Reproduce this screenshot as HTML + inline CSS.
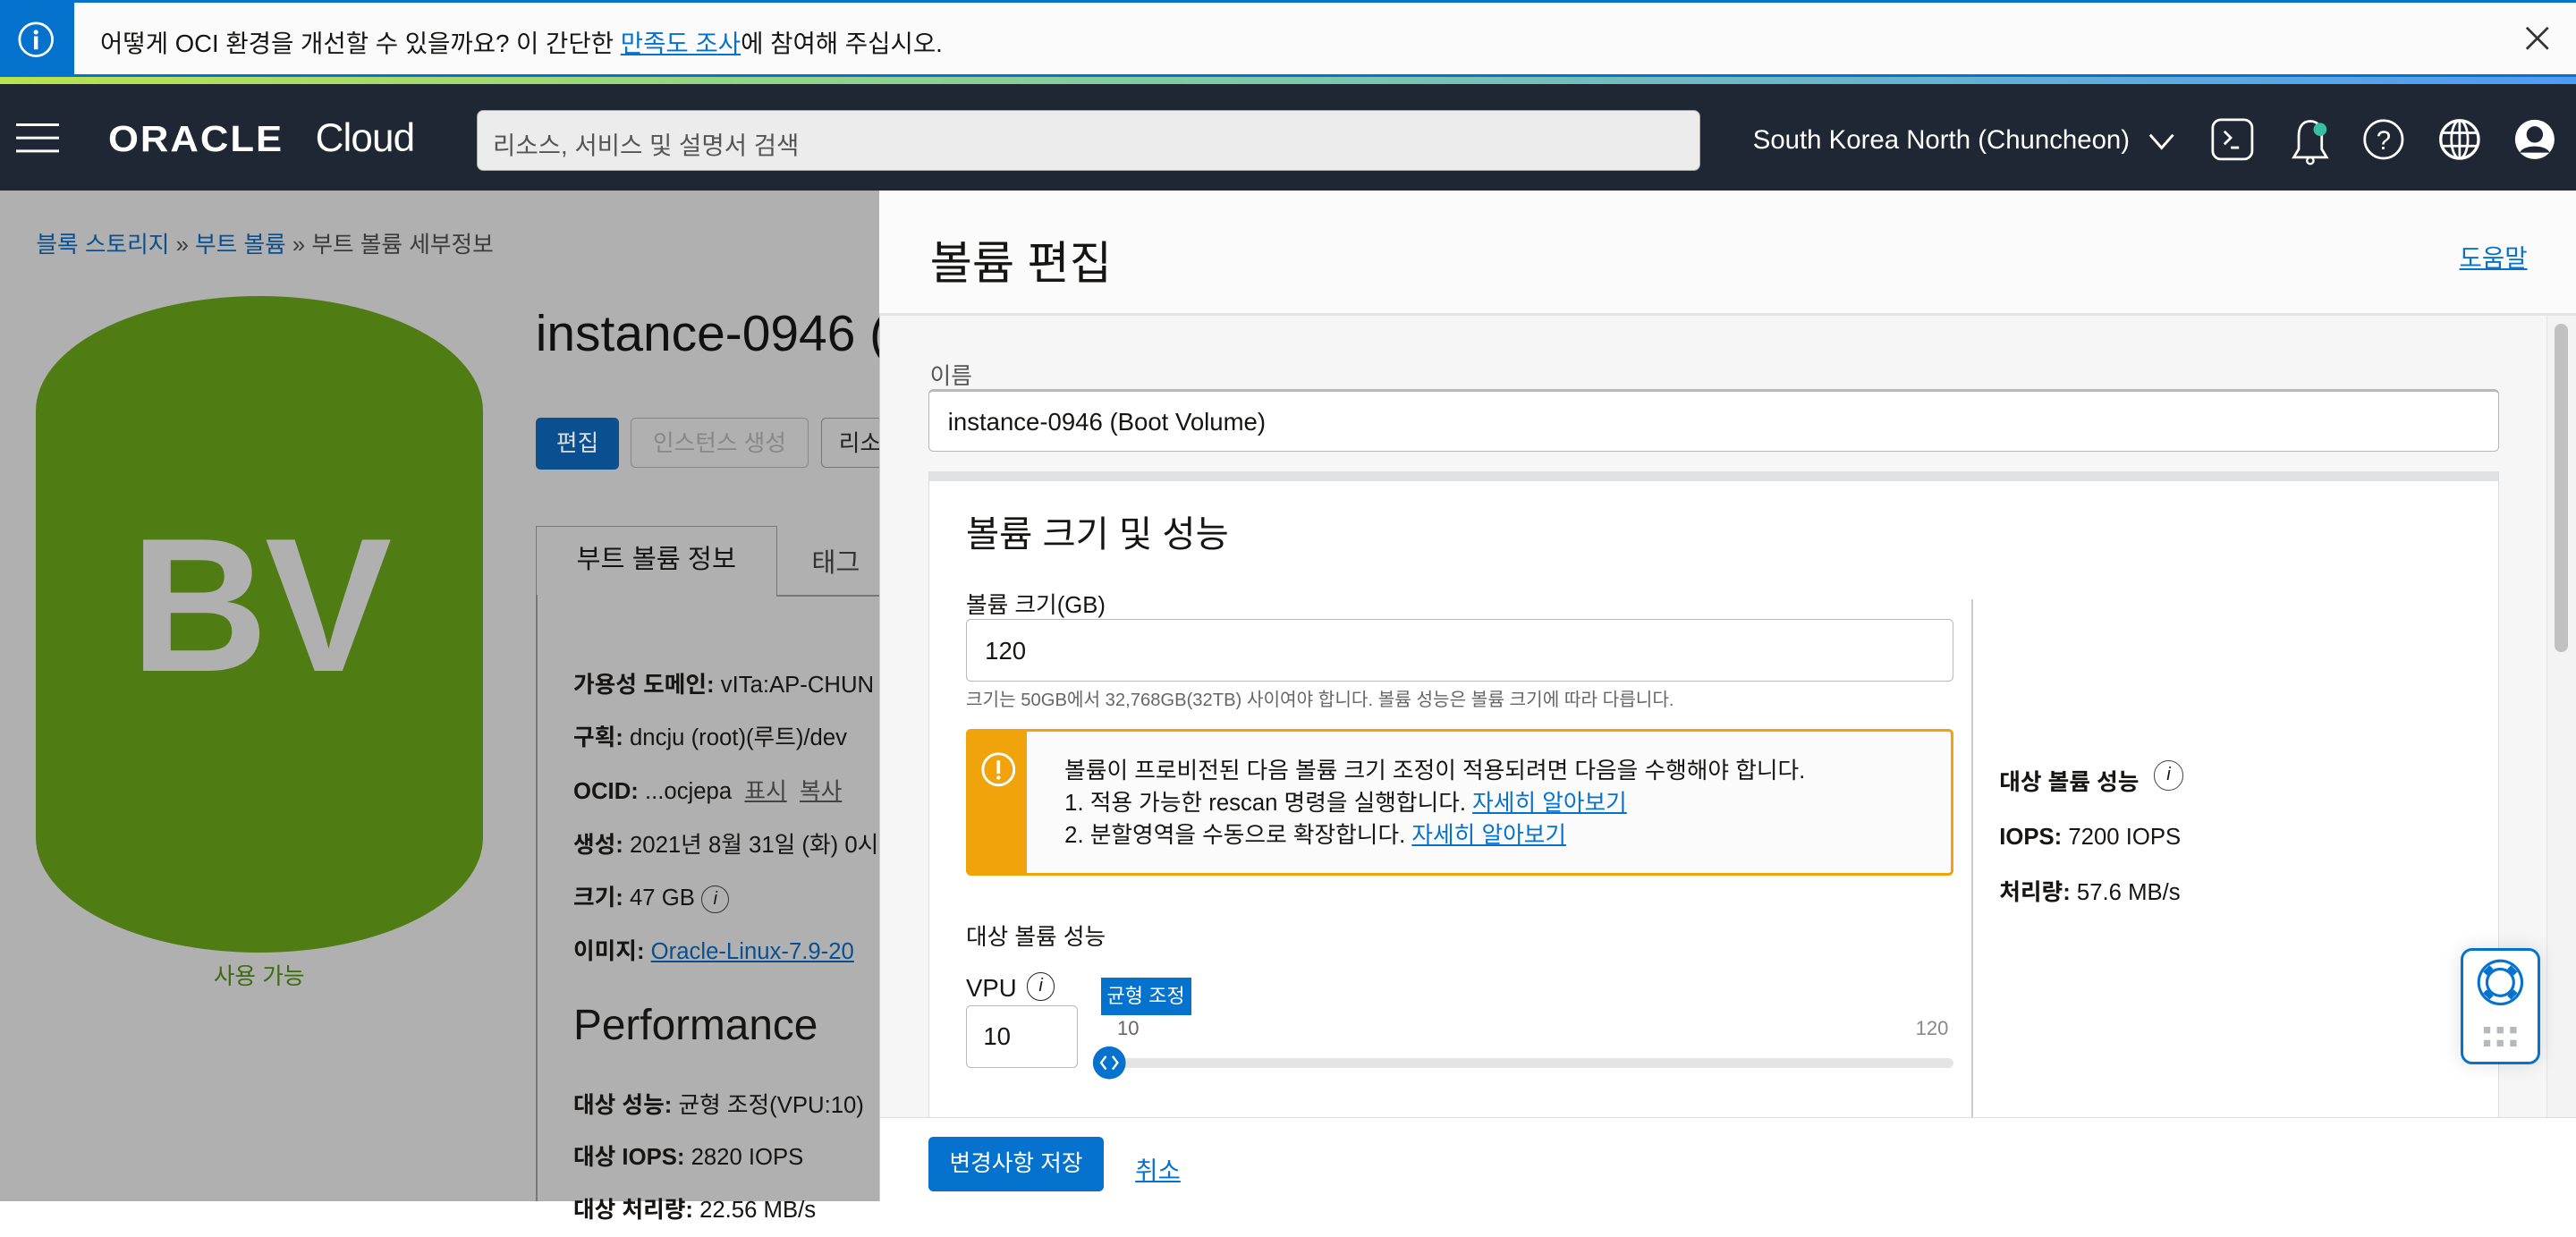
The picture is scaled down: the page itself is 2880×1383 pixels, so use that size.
<!DOCTYPE html>
<html><head><meta charset="utf-8"><style>
html{zoom:1.8367}
body{margin:0;width:1568px;height:731px;overflow:hidden;position:relative;font-family:"Liberation Sans","Noto Sans CJK KR",sans-serif;color:#161513;background:#fff}
.a{position:absolute}
.lk{color:#0572ce;text-decoration:underline}
.ov{color:#161513}
</style></head><body>
<!-- banner -->
<div class="a" style="left:0;top:0;width:1568px;height:47px;background:#fbfbfb;border-top:2px solid #0572ce;border-bottom:2px solid #0572ce;box-sizing:border-box"></div>
<div class="a" style="left:0;top:0;width:45px;height:47px;background:#0572ce"></div>
<svg class="a" style="left:11px;top:13px" width="22" height="22" viewBox="0 0 22 22"><circle cx="11" cy="11" r="10" fill="none" stroke="#fff" stroke-width="1.5"/><circle cx="11" cy="6.5" r="1.4" fill="#fff"/><rect x="9.8" y="9" width="2.4" height="8" fill="#fff"/></svg>
<div class="a" style="left:61px;top:14px;font-size:15px">어떻게 OCI 환경을 개선할 수 있을까요? 이 간단한 <span class="lk">만족도 조사</span>에 참여해 주십시오.</div>
<svg class="a" style="left:1537px;top:16px" width="15" height="15"><path d="M1 1L14 14M14 1L1 14" stroke="#333" stroke-width="1.5"/></svg>
<div class="a" style="left:0;top:47px;width:1568px;height:4px;background:linear-gradient(90deg,#b9e34b,#7fc8a9 50%,#4f9cf5)"></div>
<!-- nav -->
<div class="a" style="left:0;top:51px;width:1568px;height:65px;background:#1e2733"></div>
<div class="a" style="left:10px;top:75px;width:26px;height:2px;background:#fff;box-shadow:0 8px 0 #fff,0 16px 0 #fff"></div>
<div class="a" style="left:66px;top:72px;color:#fff;font-size:22px;font-weight:bold;letter-spacing:1px;transform:scaleX(1.08);transform-origin:left">ORACLE</div>
<div class="a" style="left:192px;top:71px;color:#fff;font-size:24px;letter-spacing:-0.5px">Cloud</div>
<div class="a" style="left:290px;top:67px;width:745px;height:37px;background:#ececec;border-radius:4px;border:1px solid #aaa;box-sizing:border-box"></div>
<div class="a" style="left:300px;top:76px;font-size:15px;color:#555">리소스, 서비스 및 설명서 검색</div>
<div class="a" style="left:1067px;top:76px;font-size:16px;color:#fff">South Korea North (Chuncheon)</div>
<svg class="a" style="left:1308px;top:80px" width="16" height="12"><path d="M1 2L8 10L15 2" stroke="#fff" fill="none" stroke-width="1.6"/></svg>
<svg class="a" style="left:1346px;top:72px" width="26" height="26"><rect x="1" y="1" width="24" height="24" rx="5" fill="none" stroke="#fff" stroke-width="1.5"/><path d="M8 8L12 12L8 16M12 18H17" stroke="#fff" fill="none" stroke-width="1.5"/></svg>
<svg class="a" style="left:1393px;top:71px" width="26" height="30"><path d="M13 3C8 3 6 7 6 12V20L3 25H23L20 20V12C20 7 18 3 13 3Z" stroke="#fff" fill="none" stroke-width="1.5"/><circle cx="13" cy="27" r="2" stroke="#fff" fill="none" stroke-width="1.3"/><circle cx="19" cy="8" r="4" fill="#37c0a0"/></svg>
<svg class="a" style="left:1438px;top:72px" width="26" height="26"><circle cx="13" cy="13" r="11.5" stroke="#fff" fill="none" stroke-width="1.5"/><text x="13" y="19" fill="#fff" font-size="16" text-anchor="middle" font-family="Liberation Sans">?</text></svg>
<svg class="a" style="left:1484px;top:72px" width="26" height="26"><circle cx="13" cy="13" r="11.5" stroke="#fff" fill="none" stroke-width="1.8"/><ellipse cx="13" cy="13" rx="5" ry="11.5" stroke="#fff" fill="none" stroke-width="1.5"/><path d="M2 9H24M2 17H24M13 1V25" stroke="#fff" stroke-width="1.5"/></svg>
<svg class="a" style="left:1530px;top:72px" width="26" height="26"><circle cx="13" cy="13" r="12" fill="#fff"/><circle cx="13" cy="10" r="5" fill="#1e2733"/><path d="M4 21C6 16 20 16 22 21" fill="#1e2733"/></svg>
<!-- left dimmed page -->
<div class="a" style="left:0;top:116px;width:535px;height:615px;background:#b0b0b0"></div>
<div class="a" style="left:22px;top:138px;font-size:14px;color:#3b3b3b"><span style="color:#0a4f8f">블록 스토리지</span> » <span style="color:#0a4f8f">부트 볼륨</span> » 부트 볼륨 세부정보</div>
<div class="a" style="left:22px;top:180px;width:272px;height:400px;background:#507c14;border-radius:136px 136px 136px 136px/70px 70px 70px 70px"></div>
<div class="a" style="left:22px;top:302px;width:272px;text-align:center;font-size:116px;font-weight:bold;color:#b0b0b0;letter-spacing:-2px">BV</div>
<div class="a" style="left:130px;top:583px;font-size:14px;color:#3e6a10">사용 가능</div>
<div class="a" style="left:326px;top:185px;font-size:31px;color:#111">instance-0946 (</div>
<div class="a" style="left:326px;top:254px;width:51px;height:32px;background:#0a4f8f;border-radius:3px;color:#ddd;font-size:14px;text-align:center;line-height:32px">편집</div>
<div class="a" style="left:384px;top:254px;width:108px;height:31px;border:1px solid #888;border-radius:3px;color:#888;font-size:14px;text-align:center;line-height:31px;box-sizing:border-box">인스턴스 생성</div>
<div class="a" style="left:500px;top:254px;width:40px;height:31px;border:1px solid #777;border-radius:3px;color:#222;font-size:14px;line-height:31px;padding-left:10px;box-sizing:border-box">리소</div>
<div class="a" style="left:326px;top:320px;width:147px;height:43px;border:1px solid #777;border-bottom:none;box-sizing:border-box;font-size:16px;text-align:center;line-height:40px">부트 볼륨 정보</div>
<div class="a" style="left:473px;top:362px;width:62px;height:1px;background:#777"></div>
<div class="a" style="left:326px;top:362px;width:1px;height:369px;background:#777"></div>
<div class="a" style="left:494px;top:330px;font-size:16px;color:#333">태그</div>
<div class="a ov" style="left:349px;top:401px;font-size:14px;line-height:32.5px">
<div><b>가용성 도메인:</b> vITa:AP-CHUN</div>
<div><b>구획:</b> dncju (root)(루트)/dev</div>
<div><b>OCID:</b> ...ocjepa &nbsp;<u style="color:#444">표시</u> &nbsp;<u style="color:#444">복사</u></div>
<div><b>생성:</b> 2021년 8월 31일 (화) 0시</div>
<div><b>크기:</b> 47 GB <span style="display:inline-block;width:16px;height:16px;border:1px solid #333;border-radius:50%;text-align:center;font-size:11px;line-height:16px;font-style:italic;vertical-align:middle">i</span></div>
<div><b>이미지:</b> <u style="color:#0a4f8f">Oracle-Linux-7.9-20</u></div>
</div>
<div class="a ov" style="left:349px;top:609px;font-size:26px">Performance</div>
<div class="a ov" style="left:349px;top:657px;font-size:14px;line-height:32px">
<div><b>대상 성능:</b> 균형 조정(VPU:10)</div>
<div><b>대상 IOPS:</b> 2820 IOPS</div>
<div><b>대상 처리량:</b> 22.56 MB/s</div>
</div>
<!-- panel -->
<div class="a" style="left:535px;top:116px;width:1033px;height:615px;background:#f6f6f6;border-left:1px solid #ccc;box-sizing:border-box"></div>
<div class="a" style="left:535px;top:116px;width:1033px;height:76px;background:#fbfbfb;border-bottom:2px solid #e4e4e4;box-sizing:border-box"></div>
<div class="a" style="left:566px;top:137px;font-size:28px">볼륨 편집</div>
<div class="a lk" style="left:1497px;top:145px;font-size:15px">도움말</div>
<div class="a" style="left:566px;top:218px;font-size:14px;color:#555">이름</div>
<div class="a" style="left:565px;top:237px;width:956px;height:38px;background:#fff;border:1px solid #b8b8b8;border-top:2px solid #b8b8b8;border-radius:3px;box-sizing:border-box"></div>
<div class="a" style="left:577px;top:248px;font-size:15px">instance-0946 (Boot Volume)</div>
<div class="a" style="left:565px;top:287px;width:956px;height:400px;background:#fff;border:1px solid #ddd;border-top:6px solid #dfe1e3;box-sizing:border-box"></div>
<div class="a" style="left:588px;top:307px;font-size:22px">볼륨 크기 및 성능</div>
<div class="a" style="left:1200px;top:365px;width:1px;height:320px;background:#ccc"></div>
<div class="a" style="left:588px;top:357px;font-size:14px">볼륨 크기(GB)</div>
<div class="a" style="left:588px;top:377px;width:601px;height:38px;border:1px solid #b8b8b8;border-radius:3px;box-sizing:border-box;font-size:15px;padding:10px 11px">120</div>
<div class="a" style="left:588px;top:417px;font-size:11px;color:#666">크기는 50GB에서 32,768GB(32TB) 사이여야 합니다. 볼륨 성능은 볼륨 크기에 따라 다릅니다.</div>
<div class="a" style="left:588px;top:444px;width:601px;height:89px;border:2px solid #f0a30a;border-radius:3px;background:#fbfbfb;box-sizing:border-box"></div>
<div class="a" style="left:588px;top:444px;width:37px;height:89px;background:#f0a30a;border-radius:3px 0 0 3px"></div>
<svg class="a" style="left:597px;top:458px" width="21" height="21"><circle cx="10.5" cy="10.5" r="9.5" fill="none" stroke="#fff" stroke-width="1.6"/><rect x="9.5" y="5" width="2" height="8" fill="#fff"/><circle cx="10.5" cy="15.5" r="1.2" fill="#fff"/></svg>
<div class="a" style="left:648px;top:460px;font-size:14px;line-height:19.5px">볼륨이 프로비전된 다음 볼륨 크기 조정이 적용되려면 다음을 수행해야 합니다.<br>1. 적용 가능한 rescan 명령을 실행합니다. <span class="lk">자세히 알아보기</span><br>2. 분할영역을 수동으로 확장합니다. <span class="lk">자세히 알아보기</span></div>
<div class="a" style="left:588px;top:559px;font-size:14px">대상 볼륨 성능</div>
<div class="a" style="left:588px;top:593px;font-size:15px">VPU</div>
<div class="a" style="left:625px;top:592px;width:16px;height:16px;border:1px solid #222;border-radius:50%;text-align:center;font-size:11px;line-height:16px;font-style:italic">i</div>
<div class="a" style="left:588px;top:612px;width:68px;height:38px;border:1px solid #b8b8b8;border-radius:3px;box-sizing:border-box;font-size:15px;padding:10px 10px">10</div>
<div class="a" style="left:670px;top:595px;width:55px;height:23px;background:#0572ce;color:#fff;font-size:12px;text-align:center;line-height:23px">균형 조정</div>
<div class="a" style="left:680px;top:619px;font-size:12px;color:#666">10</div>
<div class="a" style="left:1166px;top:619px;font-size:12px;color:#888">120</div>
<div class="a" style="left:675px;top:644px;width:514px;height:6px;background:#e4e4e4;border-radius:3px"></div>
<svg class="a" style="left:664px;top:636px" width="22" height="22"><circle cx="11" cy="11" r="10" fill="#0572ce"/><path d="M9 7L6 11L9 15M13 7L16 11L13 15" stroke="#fff" fill="none" stroke-width="1.3"/></svg>
<div class="a" style="left:1217px;top:465px;font-size:14px;font-weight:bold">대상 볼륨 성능</div>
<div class="a" style="left:1311px;top:463px;width:17px;height:17px;border:1px solid #444;border-radius:50%;text-align:center;font-size:11px;line-height:17px;font-style:italic">i</div>
<div class="a" style="left:1217px;top:502px;font-size:14px"><b>IOPS:</b> 7200 IOPS</div>
<div class="a" style="left:1217px;top:532px;font-size:14px"><b>처리량:</b> 57.6 MB/s</div>
<!-- scrollbar -->
<div class="a" style="left:1550px;top:192px;width:18px;height:488px;background:#f3f3f3;border-left:1px solid #e2e2e2"></div>
<div class="a" style="left:1555px;top:197px;width:8px;height:200px;background:#c1c1c1;border-radius:4px"></div>
<!-- help widget -->
<div class="a" style="left:1498px;top:577px;width:48px;height:71px;background:#fff;border:2px solid #0572ce;border-radius:7px;box-sizing:border-box;box-shadow:0 0 12px rgba(0,0,0,.12)"></div>
<svg class="a" style="left:1506px;top:582px" width="32" height="32" viewBox="0 0 32 32"><circle cx="16" cy="16" r="14" fill="#0572ce"/><circle cx="16" cy="16" r="12.3" fill="#fff"/><circle cx="16" cy="16" r="9" fill="#0572ce"/><circle cx="16" cy="16" r="7.3" fill="#fff"/><g stroke="#0572ce" stroke-width="5.5"><path d="M9.8 9.8L7.5 7.5M22.2 9.8L24.5 7.5M9.8 22.2L7.5 24.5M22.2 22.2L24.5 24.5"/></g></svg>
<svg class="a" style="left:1511px;top:625px" width="24" height="14"><g fill="#b5b8bd"><rect x="1" y="0" width="4" height="4"/><rect x="9" y="0" width="4" height="4"/><rect x="17" y="0" width="4" height="4"/><rect x="1" y="8" width="4" height="4"/><rect x="9" y="8" width="4" height="4"/><rect x="17" y="8" width="4" height="4"/></g></svg>
<!-- footer -->
<div class="a" style="left:536px;top:680px;width:1032px;height:51px;background:#fff;border-top:1px solid #ddd"></div>
<div class="a" style="left:565px;top:692px;width:107px;height:33px;background:#0572ce;border-radius:3px;color:#fff;font-size:14px;text-align:center;line-height:33px">변경사항 저장</div>
<div class="a lk" style="left:691px;top:700px;font-size:15px">취소</div>
</body></html>
